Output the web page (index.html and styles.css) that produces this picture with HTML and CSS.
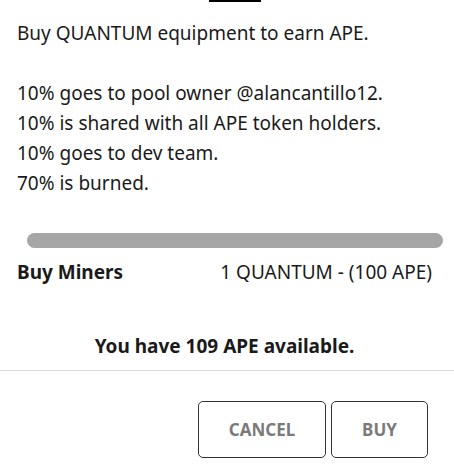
FILE: index.html
```html
<!DOCTYPE html>
<html lang="en">
<head>
    <meta charset="UTF-8">
    <meta name="viewport" content="width=device-width, initial-scale=1.0">
    <title>Buy Miners</title>
    <link rel="stylesheet" href="styles.css">
</head>
<body>

<div class="top-line"></div>

<section class="content">
    <p class="info">
        Buy QUANTUM equipment to earn APE.<br><br>
        10% goes to pool owner @alancantillo12.<br>
        10% is shared with all APE token holders.<br>
        10% goes to dev team.<br>
        70% is burned.
    </p>

    <div class="slider"></div>

    <div class="row">
        <span class="row-label">Buy Miners</span>
        <span class="row-value">1 QUANTUM - (100 APE)</span>
    </div>

    <p class="balance">You have 109 APE available.</p>
</section>

<footer class="actions">
    <button class="btn btn-cancel">Cancel</button>
    <button class="btn btn-buy">Buy</button>
</footer>

</body>
</html>
```

FILE: styles.css
```css
body {
    font-family: "Noto Sans", "Open Sans", sans-serif;
    font-size: 19px;
    color: #1a1a1a;
    background-color: #fff;
    margin: 0;
    padding: 0;
}

.top-line {
    width: 52px;
    height: 2px;
    margin-left: 209px;
    background-color: #000;
}

.content {
    padding: 0 22px 0 17px;
}

.info {
    margin: 16px 0 0;
    line-height: 30px;
}

.slider {
    height: 15px;
    margin: 35px -11px 0 10px;
    border-radius: 8px;
    background-color: #a6a6a6;
}

.row {
    display: flex;
    justify-content: space-between;
    margin-top: 12px;
    line-height: 24px;
}

.row-label {
    font-weight: bold;
}

.balance {
    margin: 50px 0 0;
    text-align: center;
    font-weight: bold;
    line-height: 24px;
}

.actions {
    display: flex;
    justify-content: flex-end;
    gap: 5px;
    margin-top: 12px;
    padding: 30px 26px 0 0;
    border-top: 1px solid #ddd;
    width: 428px;
}

.btn {
    height: 57px;
    padding: 0;
    font-family: inherit;
    font-size: 17px;
    font-weight: bold;
    text-transform: uppercase;
    color: #7a7a7a;
    background-color: #fff;
    border: 1px solid #333;
    border-radius: 5px;
    cursor: pointer;
}

.btn-cancel {
    width: 128px;
}

.btn-buy {
    width: 97px;
}
```
